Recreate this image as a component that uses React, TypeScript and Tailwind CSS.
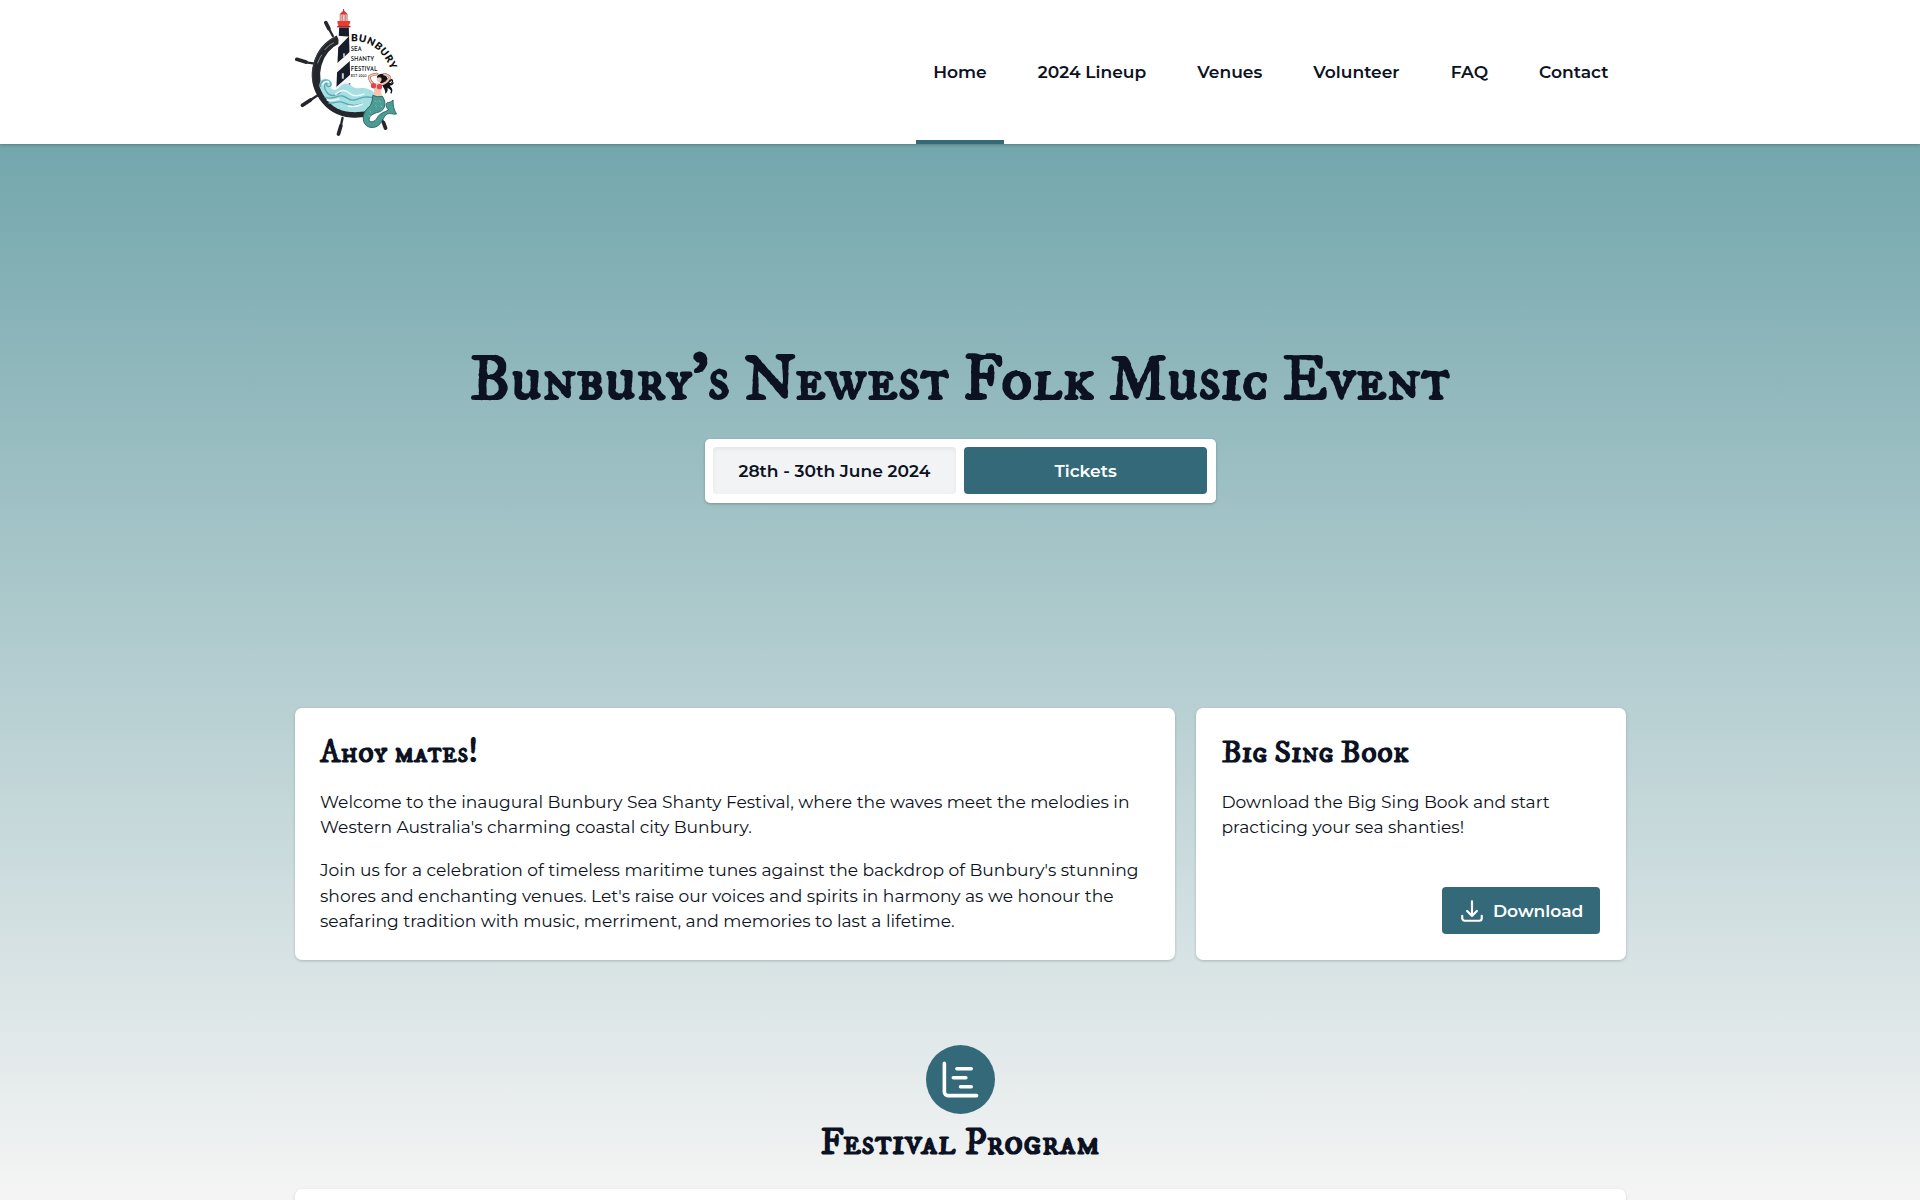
const NAV = [
  { label: "Home", active: true },
  { label: "2024 Lineup" },
  { label: "Venues" },
  { label: "Volunteer" },
  { label: "FAQ" },
  { label: "Contact" },
];

const HEADING =
  "font-['IM_Fell_DW_Pica_SC','IM_FELL_DW_Pica_SC','Liberation_Serif',serif] font-bold whitespace-nowrap text-[#0c1222]";

function Logo() {
  return (
    <svg viewBox="29.5 0 330 432" className="h-[144px] w-[110px] shrink-0" role="img">
      <defs>
        <clipPath id="tower">
          <path d="M162 82h29l5 190h-43z" />
        </clipPath>
        <clipPath id="sea">
          <path d="M98 190H330V345H205A112 112 0 0 1 98 215Z" />
        </clipPath>
        <path id="arc" d="M197 124Q286 119 322 222" />
      </defs>
      <g stroke="#25272c" strokeLinecap="round">
        <path d="M143 108 130 84M84 190 62 187M98 286 76 300M172 354 167 378M287 352 295 368" strokeWidth="7" />
        <path d="M131 86 122 68M62 186 35 178M76 300 52 316M167 378 160 402M295 368 301 384" strokeWidth="11" />
      </g>
      <path d="M160 118A117 117 0 1 0 291 308" fill="none" stroke="#25272c" strokeWidth="25" />
      <path d="M152 111A126 126 0 0 0 84 246" fill="none" stroke="#464a51" strokeWidth="2" />
      <path d="M118 150q12-15 28-22M97 190q6-17 13-26" fill="none" stroke="#8c9097" strokeWidth="3" />
      <path d="M150 316q22 16 55 18t62-12" fill="none" stroke="#555960" strokeWidth="3" />
      <g clipPath="url(#tower)">
        <path d="M150 80h52v195h-52z" fill="#f7f7f5" />
        <path d="M158 80h40v30l-40-3z" fill="#171c2b" />
        <path d="M158 143 200 100v50l-47 42zM150 222l52-46v42l-52 46zM150 275l52-30v30z" fill="#171c2b" />
      </g>
      <path d="M170 220h6v16h-6zM174 160h5v11h-5z" fill="#c9cdd4" />
      <path d="M163 43 176 31l12 12z" fill="#e3352f" />
      <path d="M165 43h21v22h-21z" fill="#f6c9bd" stroke="#b84a42" strokeWidth="2" />
      <path d="M171 44v21M180 44v21" stroke="#8d4b49" strokeWidth="2" />
      <path d="M175 27v8" stroke="#b83c37" strokeWidth="3" />
      <path d="M157 63h38v8h-3v10h-33V71h-2z" fill="#e93a33" />
      <path d="M156 78h40v4h-40z" fill="#a72725" />
      <g clipPath="url(#sea)">
        <path
          d="M103 260c-2-24 17-28 29-21 11 7 11 19 3 22 6 8 15 13 25 3 10-14 28-18 39-7 11 12 28 5 42 8 17 4 26 10 30 20l4 35c-18 12-48 18-78 16-35-3-72-19-94-76z"
          fill="#a6dfe2"
        />
        <path
          d="M105 261c0-18 16-25 27-17 9 7 6 16-1 16-8 0-8-9-4-10-10-2-13 14-2 27 15 20 39 3 47-7M118 291c22 11 35-6 53-3s21 18 41 11 27-10 49-7M130 309c22 2 28-9 45-1s37 13 55 3"
          fill="none"
          stroke="#5aa9b4"
          strokeWidth="4"
        />
        <path
          d="M112 255c5-13 17-13 20-7M150 284c12-13 28-18 42-5s30 8 46 3M125 300c16 4 24-1 38-3M188 318c18 4 28 2 44-6"
          fill="none"
          stroke="#eefafa"
          strokeWidth="5"
        />
      </g>
      <g fill="#111" fontFamily="'Josefin Sans', 'Open Sans', sans-serif" fontWeight="600">
        <text fontSize="30" fontWeight="800" fontFamily="Lato, sans-serif">
          <textPath href="#arc" textLength="158" lengthAdjust="spacing">
            BUNBURY
          </textPath>
        </text>
        <text x="197" y="154" fontSize="22" textLength="33" lengthAdjust="spacingAndGlyphs">SEA</text>
        <text x="197" y="183" fontSize="22" textLength="70" lengthAdjust="spacingAndGlyphs">SHANTY</text>
        <text x="197" y="212" fontSize="22" textLength="80" lengthAdjust="spacingAndGlyphs">FESTIVAL</text>
        <text x="197" y="231" fontSize="12" fontWeight="400" textLength="47" lengthAdjust="spacingAndGlyphs">EST. 2023</text>
      </g>
      <path
        d="M275 230c8-12 26-11 30 2 2 9 13 8 17 4-2 8-8 10-11 10 5 5 12 4 15 1-1 9-9 10-12 10 4 5 5 10 3 15-3-6-8-7-10-9 2 8-1 15-7 18 2-11-5-17-8-24-3-9-15-14-17-27z"
        fill="#12151b"
      />
      <path d="M316 237q11 5 3 12M315 262q8 8 2 18" fill="none" stroke="#12151b" strokeWidth="4" />
      <path
        d="M264 252c-6-4-11-13-12-22 5-5 14-7 24-8M287 254c12-3 23-13 27-22-4-6-10-8-17-9"
        fill="none"
        stroke="#8d5548"
        strokeWidth="7.5"
        strokeLinecap="round"
        strokeLinejoin="round"
      />
      <path
        d="M264 252c-6-4-11-13-12-22 5-5 14-7 24-8M287 254c12-3 23-13 27-22-4-6-10-8-17-9"
        fill="none"
        stroke="#f5c6b1"
        strokeWidth="5"
        strokeLinecap="round"
        strokeLinejoin="round"
      />
      <path d="M264 250h26c1 14-3 19-1 30l2 15-27-4c3-12 5-20 0-27z" fill="#f5c6b1" />
      <ellipse cx="282" cy="238" rx="7" ry="9" fill="#f5c6b1" />
      <path d="M275 233c5-9 14-6 15 2l-7-3z" fill="#12151b" />
      <circle cx="265" cy="257" r="8" fill="#e2434f" />
      <circle cx="283" cy="260" r="8" fill="#e2434f" />
      <path
        d="M263 286q13 7 29 3C304 308 302 328 282 336C262 340 250 350 252 362C262 370 272 362 278 350C286 338 300 336 310 330C304 324 300 312 306 308C312 308 318 306 324 300C322 316 328 332 334 342C322 344 316 338 306 342C296 348 294 360 284 372C270 388 244 386 236 366C228 340 246 326 256 316Q262 304 263 286Z"
        fill="#4a9c95"
        stroke="#1d5b5b"
        strokeWidth="2.5"
        strokeLinejoin="round"
      />
      <path d="M270 302l4 5m8-6l4 6m-16 8l5 5m12-4l4 6m-38 10l4 5m-6 9l5 5" stroke="#9fd3c8" strokeWidth="2" />
    </svg>
  );
}

export default function App() {
  return (
    <div className="flex h-[1200px] w-[1920px] flex-col overflow-hidden bg-[#f4f4f4] font-['Montserrat','Inter',sans-serif] text-[17.1px] leading-[25.7px] text-[#0c1222]">
      <header className="relative z-10 h-[144px] shrink-0 bg-white shadow-[0_1px_3px_rgba(0,0,0,0.25)]">
        <div className="mx-auto flex h-full w-[1331px] justify-between">
          <Logo />
          <nav className="flex h-full gap-[16.9px]">
            {NAV.map((item) => (
              <a
                key={item.label}
                className={`flex items-center border-y-[4px] border-t-transparent px-[17.1px] font-semibold whitespace-nowrap ${
                  item.active ? "border-b-[#34697a]" : "border-b-transparent"
                }`}
              >
                {item.label}
              </a>
            ))}
          </nav>
        </div>
      </header>

      <main className="flex flex-1 flex-col items-center bg-linear-to-b from-[#73a7ad] to-[#f4f4f4] to-[1050px]">
        <section className="flex h-[563.5px] shrink-0 flex-col items-center pt-[192px]">
          <h1 className={`${HEADING} h-[102.5px] text-[64.2px] leading-[90px]`}>Bunbury’s Newest Folk Music Event</h1>
          <div className="grid h-[64px] w-[511px] grid-cols-2 gap-[8.5px] rounded-[5px] bg-white p-[8.5px] font-semibold shadow-[0_1px_3px_rgba(0,0,0,0.25)]">
            <div className="flex items-center justify-center rounded-[4px] bg-[#f2f3f5] shadow-[inset_0_2px_4px_rgba(0,0,0,0.06)]">
              28th - 30th June 2024
            </div>
            <a className="flex items-center justify-center rounded-[4px] bg-[#34697a] text-white">Tickets</a>
          </div>
        </section>

        <section className="flex h-[252px] w-[1331px] shrink-0 gap-[21.5px]">
          <article className="w-[880px] rounded-[7px] bg-white px-[25.5px] pt-[24px] shadow-[0_1px_3px_rgba(0,0,0,0.2)]">
            <h2 className={`${HEADING} h-[57px] text-[32.14px] leading-[42px]`}>Ahoy mates!</h2>
            <p>
              Welcome to the inaugural Bunbury Sea Shanty Festival, where the waves meet the melodies in Western
              Australia's charming coastal city Bunbury.
            </p>
            <p className="mt-[17px]">
              Join us for a celebration of timeless maritime tunes against the backdrop of Bunbury's stunning shores and
              enchanting venues. Let's raise our voices and spirits in harmony as we honour the seafaring tradition with
              music, merriment, and memories to last a lifetime.
            </p>
          </article>

          <article className="flex flex-1 flex-col rounded-[7px] bg-white px-[25.5px] pt-[24px] pb-[25.5px] shadow-[0_1px_3px_rgba(0,0,0,0.2)]">
            <h2 className={`${HEADING} h-[57px] shrink-0 text-[32.14px] leading-[42px]`}>Big Sing Book</h2>
            <p>Download the Big Sing Book and start practicing your sea shanties!</p>
            <a className="mt-auto flex h-[47px] w-[158.5px] items-center gap-[8.5px] self-end rounded-[4px] bg-[#34697a] pl-[17px] font-semibold text-white">
              <svg
                viewBox="0 0 24 24"
                className="size-[26px] shrink-0"
                fill="none"
                stroke="currentColor"
                strokeWidth="2"
                strokeLinecap="round"
                strokeLinejoin="round"
              >
                <path d="M3 16.5v2.25A2.25 2.25 0 0 0 5.25 21h13.5A2.25 2.25 0 0 0 21 18.75V16.5M16.5 12 12 16.5m0 0L7.5 12m4.5 4.5V3" />
              </svg>
              Download
            </a>
          </article>
        </section>

        <section className="flex w-[1331px] flex-1 flex-col items-center pt-[85px]">
          <div className="flex size-[69px] shrink-0 items-center justify-center rounded-full bg-[#34697a] text-white">
            <svg
              viewBox="0 0 24 24"
              className="size-[43px]"
              fill="none"
              stroke="currentColor"
              strokeWidth="2"
              strokeLinecap="round"
              strokeLinejoin="round"
            >
              <path d="M10 6h8M12 16h6M3 3v16a2 2 0 0 0 2 2h16M8 11h7" />
            </svg>
          </div>
          <h2 className={`${HEADING} mt-[4px] h-[71px] shrink-0 text-[38.57px] leading-[50px]`}>Festival Program</h2>
          <div className="h-[60px] w-full shrink-0 rounded-[7px] bg-white shadow-[0_1px_3px_rgba(0,0,0,0.15)]" />
        </section>
      </main>
    </div>
  );
}
